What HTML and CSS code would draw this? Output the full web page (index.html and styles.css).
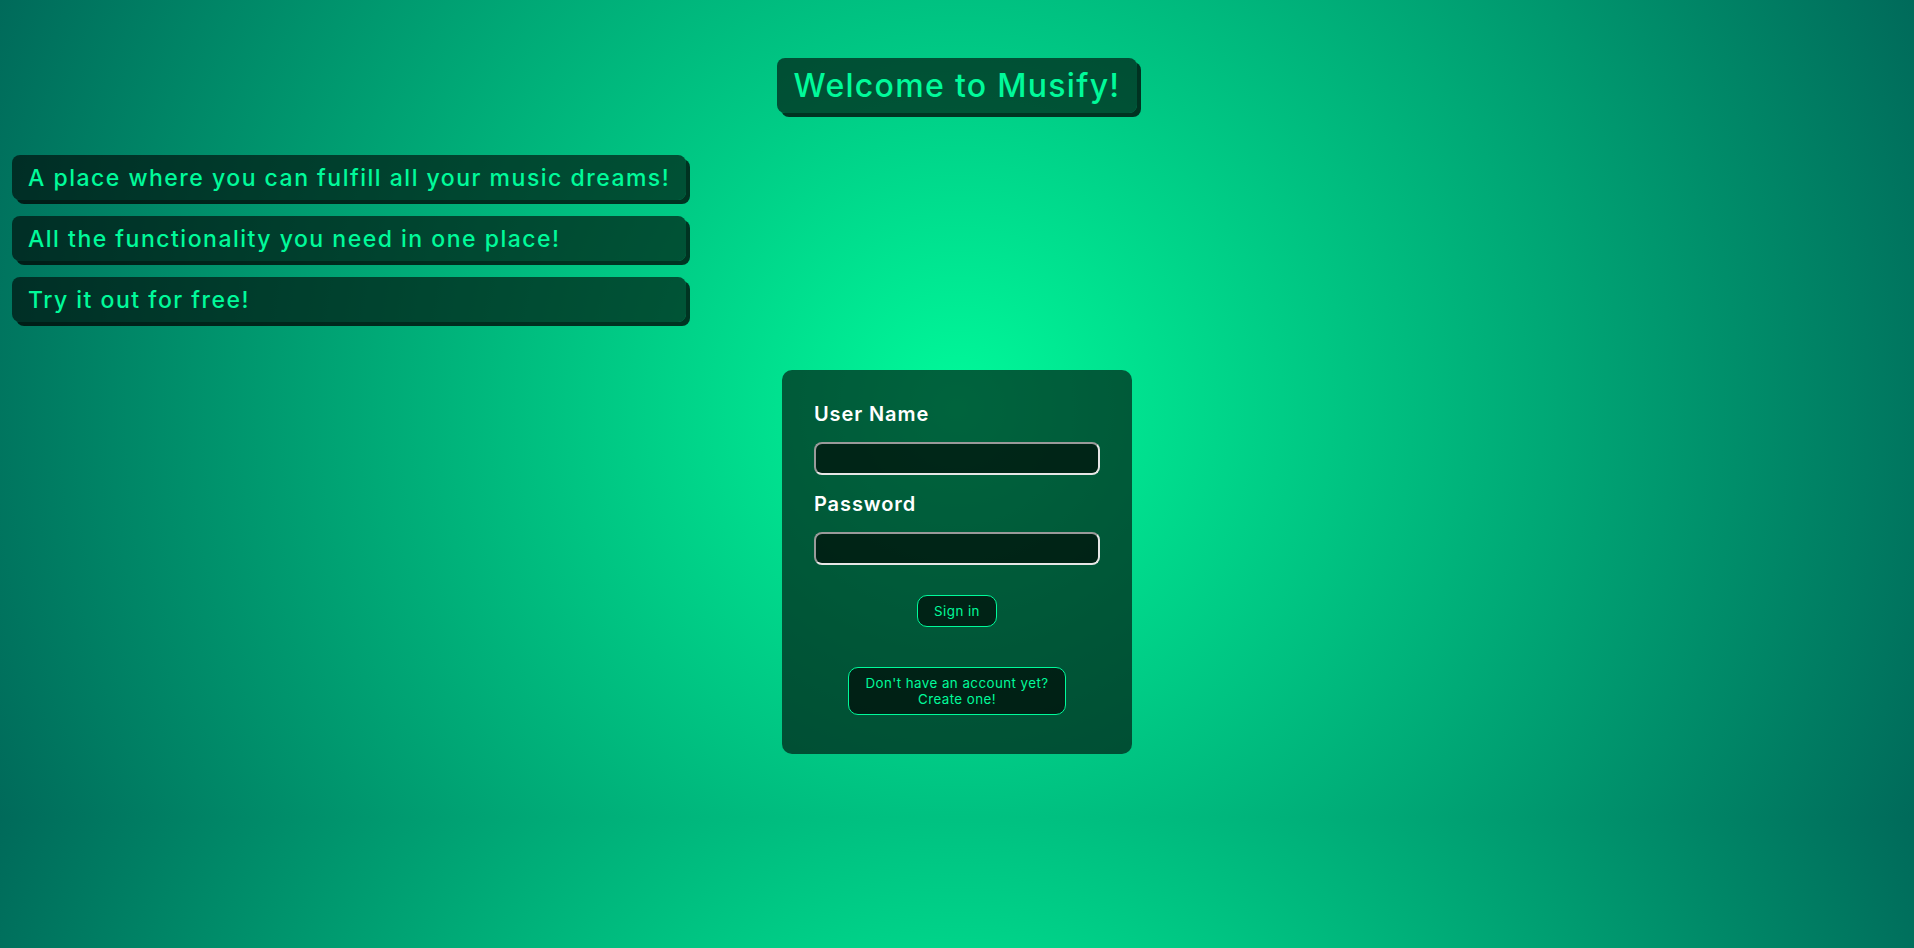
FILE: index.html
```html
<!DOCTYPE html>
<html lang="en">
<head>
<meta charset="utf-8">
<title>Musify</title>
<link rel="stylesheet" href="styles.css">
</head>
<body>
  <header class="hero">
    <h1 class="title">Welcome to Musify!</h1>
  </header>
  <ul class="pitch">
    <li class="pitch-item">A place where you can fulfill all your music dreams!</li>
    <li class="pitch-item">All the functionality you need in one place!</li>
    <li class="pitch-item">Try it out for free!</li>
  </ul>
  <main class="login-wrap">
    <form class="card" onsubmit="return false;">
      <label class="field-label" for="user">User Name</label>
      <input class="field-input" id="user" type="text">
      <label class="field-label" for="pass">Password</label>
      <input class="field-input" id="pass" type="password">
      <button class="btn btn-signin" type="submit">Sign in</button>
      <button class="btn btn-create" type="button">Don't have an account yet?<br>Create one!</button>
    </form>
  </main>
</body>
</html>
```
FILE: styles.css
```css
html {
  background: radial-gradient(circle, #00fa9a, #006a5a) 0 0 / 100% 817px repeat;
  min-height: 100%;
}
body {
  margin: 0;
  padding: 58px 0 0;
  font-family: "Inter", "DejaVu Sans", sans-serif;
  color: #00fa9a;
}
.hero {
  display: flex;
  justify-content: center;
}
.title {
  margin: 0;
  padding: 0 17px 0 17px;
  height: 55px;
  display: flex;
  align-items: center;
  font-size: 32px;
  font-weight: 500;
  letter-spacing: 1.3px;
  color: #00fa9a;
  background: rgba(0, 0, 0, 0.6);
  border-radius: 8px;
  box-shadow: 4px 4px 0 rgba(0, 0, 0, 0.75);
}
.pitch {
  list-style: none;
  margin: 42px 0 0 12px;
  padding: 0;
  display: flex;
  flex-direction: column;
  gap: 16px;
  width: fit-content;
}
.pitch-item {
  height: 45px;
  display: flex;
  align-items: center;
  padding: 0 16px;
  font-size: 23px;
  font-weight: 500;
  letter-spacing: 1.5px;
  background: rgba(0, 0, 0, 0.6);
  border-radius: 8px;
  box-shadow: 4px 4px 0 rgba(0, 0, 0, 0.75);
}
.login-wrap {
  display: flex;
  justify-content: center;
  margin-top: 48px;
}
.card {
  width: 350px;
  box-sizing: border-box;
  padding: 32px 32px 39px;
  display: flex;
  flex-direction: column;
  background: rgba(0, 0, 0, 0.6);
  border-radius: 10px;
}
.field-label {
  font-size: 20px;
  line-height: 24px;
  font-weight: 600;
  color: #ffffff;
  letter-spacing: 0.9px;
}
.field-input {
  margin: 16px 0 17px;
  height: 33px;
  box-sizing: border-box;
  width: 100%;
  border: 2px solid;
  border-color: #9a9a9a #e6e6e6 #e6e6e6 #9a9a9a;
  border-radius: 8px;
  background: rgba(0, 0, 0, 0.6);
  color: #fff;
  outline: none;
}
#pass {
  margin-bottom: 30px;
}
.btn {
  align-self: center;
  box-sizing: border-box;
  font-family: "Inter", "DejaVu Sans", sans-serif;
  font-size: 13.33px;
  line-height: 16px;
  color: #00fa9a;
  background: rgba(0, 0, 0, 0.6);
  border: 1px solid #00fa9a;
  border-radius: 10px;
  padding: 7px 16px;
  letter-spacing: 0.45px;
}
.btn-signin {
  height: 32px;
}
.btn-create {
  margin-top: 40px;
  height: 48px;
}
```
